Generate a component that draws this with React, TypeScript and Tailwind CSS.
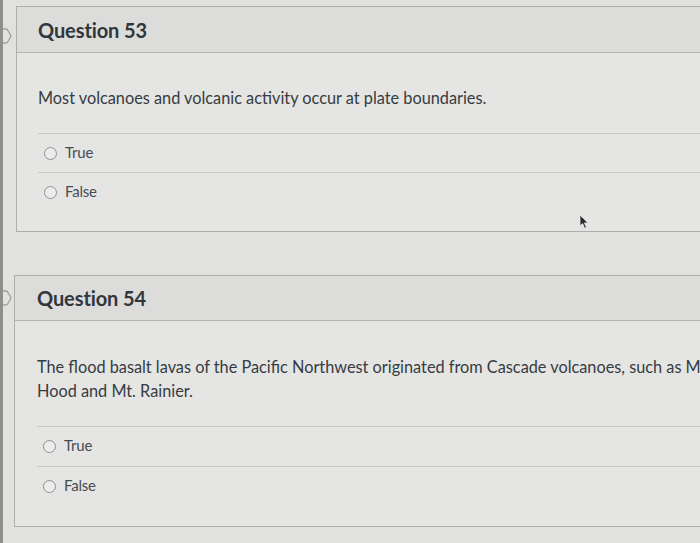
import React from 'react';

type Question = {
  number: number;
  text: string;
  options: string[];
};

const questions: Question[] = [
  {
    number: 53,
    text: 'Most volcanoes and volcanic activity occur at plate boundaries.',
    options: ['True', 'False'],
  },
  {
    number: 54,
    text: 'The flood basalt lavas of the Pacific Northwest originated from Cascade volcanoes, such as Mt. Hood and Mt. Rainier.',
    options: ['True', 'False'],
  },
];

function Chevron() {
  return (
    <svg width="9" height="16" viewBox="0 0 9 16" className="block">
      <path d="M0 1 L3 1 Q4 1 4.6 2 L7.6 7 Q8.2 8 7.6 9 L4.6 14 Q4 15 3 15 L0 15" fill="none" stroke="#a1a1a0" strokeWidth="1.4" />
    </svg>
  );
}

function Cursor() {
  return (
    <svg width="11" height="16" viewBox="0 0 11 16" className="absolute left-[579px] top-[214px]">
      <path d="M1 1 L1 12 L3.6 9.6 L5.6 14.2 L7.4 13.4 L5.4 8.9 L9 8.9 Z" fill="#2b2b30" stroke="#e8e8e6" strokeWidth="0.8" />
    </svg>
  );
}

function Radio() {
  return <span className="block w-[13px] h-[13px] rounded-full border border-[#8f9194] bg-[#ececea]" />;
}

function QuestionCard({ q, first }: { q: Question; first: boolean }) {
  return (
    <div className={first ? 'flex items-start mt-[6px]' : 'flex items-start mt-[43px]'}>
      <div className={first ? 'w-[13px] pt-[22px]' : 'w-[11px] pt-[15px]'}>
        <Chevron />
      </div>
      <div className="w-[760px] border border-[#aeaeac] bg-[#e5e5e3]">
        <div className={first ? 'h-[46px] flex items-center pl-[21px] bg-[#dcdcda] border-b border-[#b4b4b2]' : 'h-[45px] flex items-center pl-[22px] bg-[#dcdcda] border-b border-[#b4b4b2]'}>
          <h2 className="text-[20px] font-bold text-[#30363c] tracking-[-0.1px]">Question {q.number}</h2>
        </div>
        <div className={first ? 'pl-[21px] pt-[33px] pb-[20px]' : 'pl-[22px] pt-[34px] pb-[20px]'}>
          <p className="w-[700px] text-[16.3px] leading-[24px] text-[#363c42]">{q.text}</p>
          <div className={first ? 'mt-[23px]' : 'mt-[23px]'}>
            {q.options.map((opt) => (
              <div
                key={opt}
                className={first ? 'h-[39px] border-t border-[#c9c9c7] flex items-center pl-[6px] gap-[8px]' : 'h-[40px] border-t border-[#c9c9c7] flex items-center pl-[6px] gap-[8px]'}
              >
                <Radio />
                <span className="text-[15px] tracking-[-0.2px] text-[#474c52] -translate-y-[1px]">{opt}</span>
              </div>
            ))}
          </div>
        </div>
      </div>
    </div>
  );
}

export default function App() {
  return (
    <div
      className="relative w-[700px] h-[543px] overflow-hidden bg-[#e1e1df] flex"
      style={{ fontFamily: 'Lato, "Open Sans", sans-serif' }}
    >
      <div className="w-[3px] h-full bg-[#8e8e8c] shrink-0" />
      <div className="flex flex-col">
        {questions.map((q, i) => (
          <QuestionCard key={q.number} q={q} first={i === 0} />
        ))}
      </div>
      <Cursor />
    </div>
  );
}
